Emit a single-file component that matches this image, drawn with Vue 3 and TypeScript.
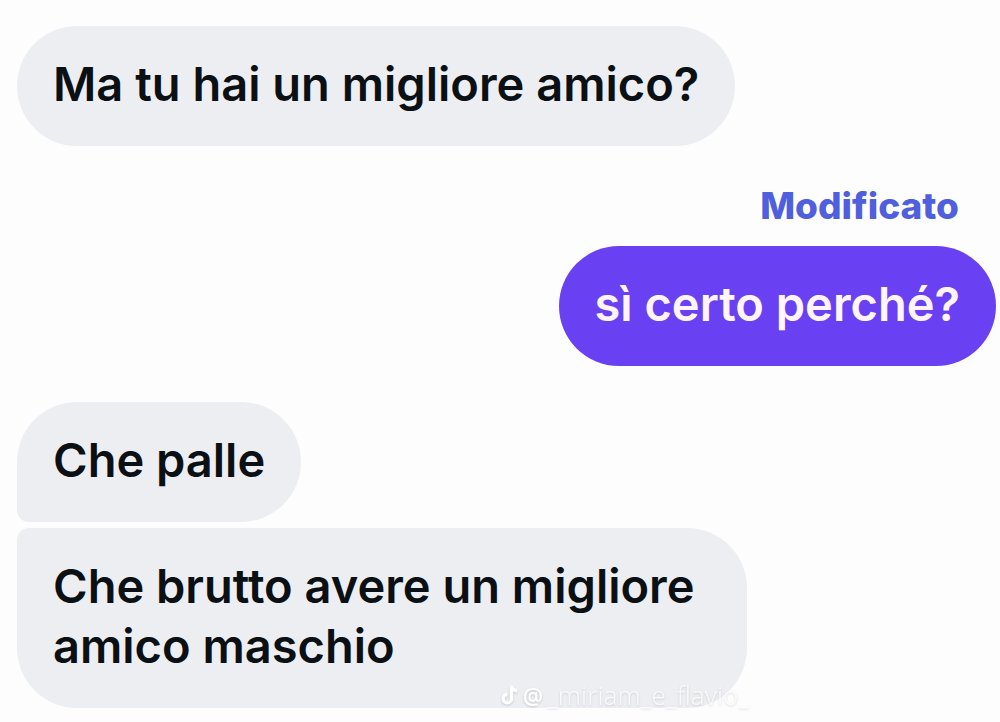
<script setup lang="ts">
interface Message {
  id: number
  text: string
  side: 'received' | 'sent'
  position: 'single' | 'first' | 'last'
  label?: string
}

const messages: Message[] = [
  { id: 1, text: 'Ma tu hai un migliore amico?', side: 'received', position: 'single' },
  { id: 2, text: 'sì certo perché?', side: 'sent', position: 'single', label: 'Modificato' },
  { id: 3, text: 'Che palle', side: 'received', position: 'first' },
  { id: 4, text: 'Che brutto avere un migliore amico maschio', side: 'received', position: 'last' },
]
</script>

<template>
  <main class="chat">
    <article
      v-for="message in messages"
      :key="message.id"
      class="message"
      :class="[message.side, message.position]"
    >
      <span v-if="message.label" class="label">{{ message.label }}</span>
      <p class="bubble">{{ message.text }}</p>
    </article>
    <div class="watermark">
      <svg class="note" viewBox="0 0 18 22" aria-hidden="true">
        <path
          d="M10.5 1.5v13.2a4.2 4.2 0 1 1-4.2-4.2M10.5 1.5c.4 3 2.6 5 5.8 5.2"
          fill="none"
          stroke="currentColor"
          stroke-width="3.4"
        />
      </svg>
      <span class="at">@</span>
      <span class="handle">_miriam_e_flavio_</span>
    </div>
  </main>
</template>

<style>
body {
  margin: 0;
  background: #fdfdfd;
}
</style>

<style scoped>
.chat {
  position: relative;
  box-sizing: border-box;
  min-height: 100vh;
  padding: 26px 4px 14px 17px;
  display: flex;
  flex-direction: column;
  overflow: hidden;
  font-family: Inter, "Liberation Sans", sans-serif;
}

.message {
  display: flex;
  flex-direction: column;
  align-items: flex-start;
}

.sent {
  align-items: flex-end;
  margin: 40px 0 36px;
}

.first {
  margin-bottom: 6px;
}

.label {
  margin: 0 37px 20px 0;
  font-size: 37px;
  line-height: 40px;
  font-weight: 800;
  color: #505fdd;
}

.bubble {
  box-sizing: border-box;
  max-width: 730px;
  margin: 0;
  padding: 28px 36px 32px;
  border-radius: 60px;
  background: #edeef2;
  color: #0b1014;
  font-size: 47px;
  line-height: 60px;
  font-weight: 600;
}

.sent .bubble {
  background: #6941f2;
  color: #fff5ff;
}

.first .bubble {
  border-bottom-left-radius: 12px;
}

.last .bubble {
  border-top-left-radius: 12px;
}

.watermark {
  position: absolute;
  left: 501px;
  bottom: 12px;
  display: flex;
  align-items: center;
  gap: 4px;
  color: #ffffff;
  font-family: "Noto Sans", sans-serif;
  font-size: 26px;
  line-height: 30px;
  filter: drop-shadow(0 1px 1px rgba(0, 0, 0, 0.16));
}

.note {
  width: 18px;
  height: 22px;
}

.at {
  font-family: Inter, sans-serif;
  font-size: 20px;
  font-weight: 600;
}

.handle {
  font-weight: 300;
  opacity: 0.8;
}
</style>
